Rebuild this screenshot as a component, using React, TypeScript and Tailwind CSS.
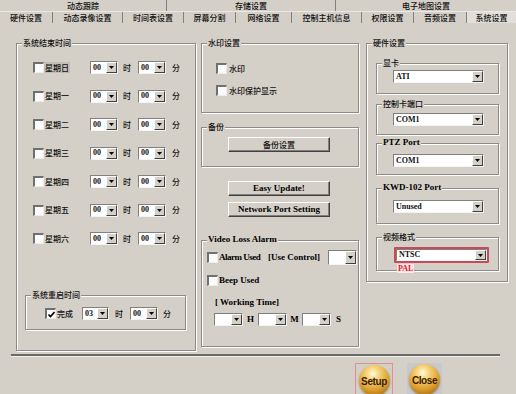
import React from "react";

const CN = "font-['Noto_Sans_CJK_SC','Noto_Sans',sans-serif] text-[8px] font-medium leading-[10px] whitespace-nowrap text-[#111]";
const EN = "font-['Liberation_Serif','Noto_Sans_CJK_SC',serif] text-[9px] font-bold leading-[11px] whitespace-nowrap";

const Check = ({ on = false }: { on?: boolean }) => (
  <span className="flex w-[11px] h-[11px] shrink-0 items-center justify-center bg-[#fbfbfb] border-t-2 border-l-2 border-t-[#707070] border-l-[#707070] border-b border-r border-b-[#ececec] border-r-[#ececec]">
    {on && (
      <svg width="7" height="7" viewBox="0 0 7 7">
        <path d="M0.5 3.5 L2.5 5.5 L6.5 1" stroke="#000" strokeWidth="1.6" fill="none" />
      </svg>
    )}
  </span>
);

const Sel = ({ w, h = "h-[13px]", v = "", className = "" }: { w: string; h?: string; v?: string; className?: string }) => (
  <div className={`flex shrink-0 bg-white border-t border-l border-t-[#808080] border-l-[#808080] border-b border-r border-b-[#f4f4f4] border-r-[#f4f4f4] ${w} ${h} ${className}`}>
    <span className="flex-1 flex items-center pl-[2px] font-['Liberation_Serif',serif] text-[8px] font-bold leading-[10px] text-[#111]">{v}</span>
    <span className="w-[11px] h-full flex items-center justify-center bg-[#d4d0c8] border-t border-l border-white border-b border-r border-b-[#404040] border-r-[#404040]">
      <svg width="5" height="3" viewBox="0 0 5 3">
        <path d="M0 0 H5 L2.5 3 Z" fill="#000" />
      </svg>
    </span>
  </div>
);

const Group = ({
  title,
  en = false,
  className = "",
  children,
}: {
  title: string;
  en?: boolean;
  className?: string;
  children?: React.ReactNode;
}) => (
  <div className={`relative shrink-0 border border-[#8e8b86] shadow-[inset_1px_1px_0_#fff,1px_1px_0_#fff] ${className}`}>
    <span className={`absolute -top-[6px] left-[5px] px-[1px] bg-[#d4d0c8] ${en ? EN + " -top-[7px]" : CN}`}>{title}</span>
    {children}
  </div>
);

const Btn = ({ label, cn = false }: { label: string; cn?: boolean }) => (
  <div className={`w-[102px] h-[15px] flex items-center justify-center bg-[#d4d0c8] border-t border-l border-white border-b border-r border-b-[#404040] border-r-[#404040] shadow-[inset_-1px_-1px_0_#808080] ${cn ? CN : EN}`}>
    {label}
  </div>
);

const Sphere = ({ label }: { label: string }) => (
  <div className="w-[31px] h-[31px] rounded-full bg-[radial-gradient(circle_at_45%_28%,#fffbe0_0%,#f7d57c_22%,#dc9e2c_58%,#8e560c_100%)] shadow-[0_1px_2px_rgba(0,0,0,0.35)] flex items-center justify-center">
    <span className="font-['Liberation_Sans',sans-serif] text-[10px] font-bold text-[#3a1c00] tracking-[-0.4px] mt-[1px]">{label}</span>
  </div>
);

const TOP_TABS = [
  { t: "动态跟踪", w: "w-[167px]" },
  { t: "存储设置", w: "w-[169px]" },
  { t: "电子地图设置", w: "flex-1" },
];

const TABS = [
  { t: "硬件设置", w: "w-[52px]" },
  { t: "动态录像设置", w: "w-[70px]" },
  { t: "时间表设置", w: "w-[61px]" },
  { t: "屏幕分割", w: "w-[52px]" },
  { t: "网络设置", w: "w-[56px]" },
  { t: "控制主机信息", w: "w-[70px]" },
  { t: "权限设置", w: "w-[52px]" },
  { t: "音频设置", w: "w-[53px]" },
];

const DAYS = ["星期日", "星期一", "星期二", "星期三", "星期四", "星期五", "星期六"];

export default function App() {
  return (
    <div className="w-[516px] h-[394px] overflow-hidden bg-[#d4d0c8] text-black flex flex-col">
      {/* tabs */}
      <div className="h-[23px] shrink-0">
        <div className="flex h-[11px]">
          {TOP_TABS.map((x, i) => (
            <div key={i} className={`${x.w} flex items-center justify-center ${i < 2 ? "border-r border-[#808080]" : ""} ${CN}`}>
              {x.t}
            </div>
          ))}
        </div>
        <div className="flex h-[12px] border-t border-[#ece9e4]">
          {TABS.map((x, i) => (
            <div key={i} className={`${x.w} flex items-center justify-center ${i > 0 ? "border-l border-[#808080]" : ""} ${CN}`}>
              {x.t}
            </div>
          ))}
          <div className={`flex-1 flex items-center justify-center bg-[#e2dfda] border-l border-[#808080] ${CN}`}>系统设置</div>
        </div>
      </div>

      {/* content */}
      <div className="h-[331px] shrink-0 flex pl-[16px] pt-[20px]">
        {/* left */}
        <Group title="系统结束时间" className="w-[180px] h-[308px] pt-[17px]">
          <div className="flex flex-col gap-[15.5px] pl-[16px]">
            {DAYS.map((d, i) => (
              <div key={d} className="flex items-center h-[13px]">
                <Check />
                <span className={`ml-[1px] w-[45px] ${CN}`}>
                  <span className={i === 0 ? "bg-[#c2beb6] px-[1px] -ml-[1px]" : ""}>{d}</span>
                </span>
                <Sel w="w-[28px]" v="00" />
                <span className={`ml-[5px] w-[11px] ${CN}`}>时</span>
                <Sel w="w-[28px]" v="00" className="ml-[4px]" />
                <span className={`ml-[6px] ${CN}`}>分</span>
              </div>
            ))}
          </div>
          <Group title="系统重启时间" className="ml-[8px] mt-[50px] w-[161px] h-[35px] pt-[11px] pl-[19px]">
            <div className="flex items-center h-[13px]">
              <Check on />
              <span className={`w-[22px] ml-[1px] ${CN}`}>完成</span>
              <Sel w="w-[27px]" v="03" className="ml-[3px]" />
              <span className={`ml-[6px] w-[11px] ${CN}`}>时</span>
              <Sel w="w-[28px]" v="00" className="ml-[4px]" />
              <span className={`ml-[5px] ${CN}`}>分</span>
            </div>
          </Group>
        </Group>

        {/* middle */}
        <div className="ml-[5px] w-[158px] flex flex-col">
          <Group title="水印设置" className="h-[70px] pt-[18px] pl-[14px]">
            <div className="flex items-center h-[13px]">
              <Check />
              <span className={`ml-[2px] ${CN}`}>水印</span>
            </div>
            <div className="flex items-center h-[13px] mt-[9px]">
              <Check />
              <span className={`ml-[2px] ${CN}`}>水印保护显示</span>
            </div>
          </Group>
          <Group title="备份" className="mt-[14px] h-[40px] pt-[9px] pl-[26px]">
            <Btn label="备份设置" cn />
          </Group>
          <div className="ml-[27px] mt-[14px]">
            <Btn label="Easy Update!" />
          </div>
          <div className="ml-[27px] mt-[6px]">
            <Btn label="Network Port Setting" />
          </div>
          <Group title="Video Loss Alarm" en className="mt-[23px] h-[107px] pt-[9px] pl-[5px]">
            <div className="flex items-center h-[15px]">
              <Check />
              <span className={`ml-[1px] w-[49px] tracking-[-0.5px] ${EN}`}>Alarm Used</span>
              <span className={`w-[60px] ${EN}`}>[Use Control]</span>
              <Sel w="w-[29px]" h="h-[15px]" />
            </div>
            <div className="flex items-center h-[13px] mt-[9px]">
              <Check />
              <span className={`ml-[1px] ${EN}`}>Beep Used</span>
            </div>
            <div className={`ml-[8px] mt-[10px] ${EN}`}>[ Working Time]</div>
            <div className="flex items-center h-[13px] mt-[5px] ml-[7px]">
              <Sel w="w-[29px]" />
              <span className={`w-[15px] text-center ${EN}`}>H</span>
              <Sel w="w-[29px]" />
              <span className={`w-[15px] text-center ${EN}`}>M</span>
              <Sel w="w-[29px]" />
              <span className={`ml-[5px] ${EN}`}>S</span>
            </div>
          </Group>
        </div>

        {/* right */}
        <div className="ml-[7px]">
          <Group title="硬件设置" className="w-[142px] h-[239px] pt-[19px] pl-[9px]">
            <Group title="显卡" className="w-[123px] h-[31px] pt-[6px] pl-[16px]">
              <Sel w="w-[91px]" v="ATI" />
            </Group>
            <Group title="控制卡端口" className="mt-[10px] w-[123px] h-[31px] pt-[8px] pl-[16px]">
              <Sel w="w-[91px]" v="COM1" />
            </Group>
            <Group title="PTZ Port" en className="mt-[8px] w-[123px] h-[32px] pt-[10px] pl-[16px]">
              <Sel w="w-[91px]" v="COM1" />
            </Group>
            <Group title="KWD-102 Port" en className="mt-[13px] w-[123px] h-[36px] pt-[11px] pl-[16px]">
              <Sel w="w-[91px]" v="Unused" />
            </Group>
            <Group title="视频格式" className="mt-[13px] w-[123px] h-[34px] pt-[9px] pl-[17px]">
              <div className="relative w-[95px] border-2 border-[#c84a5a] rounded-[1px]">
                <Sel w="w-[91px]" h="h-[12px]" v="NTSC" />
                <span className="absolute left-[1px] top-[15px] px-[1px] bg-[#fbe6e8] font-['Liberation_Serif',serif] text-[8px] font-bold leading-[9px] text-[#e0202a]">
                  PAL
                </span>
              </div>
            </Group>
          </Group>
        </div>
      </div>

      {/* separator */}
      <div className="ml-[11px] w-[489px] h-[3px] shrink-0 border-t-2 border-[#6a6a6a] border-b border-b-[#f4f2ee]" />

      {/* bottom buttons */}
      <div className="flex ml-[355px] mt-[6px] h-[40px]">
        <div className="w-[38px] h-full border border-b-0 border-[#e48c9a] flex justify-center pt-[1px]">
          <Sphere label="Setup" />
        </div>
        <div className="ml-[14px] w-[35px] h-full bg-[#c9c8cc] flex justify-center pt-[1px]">
          <Sphere label="Close" />
        </div>
      </div>
    </div>
  );
}
